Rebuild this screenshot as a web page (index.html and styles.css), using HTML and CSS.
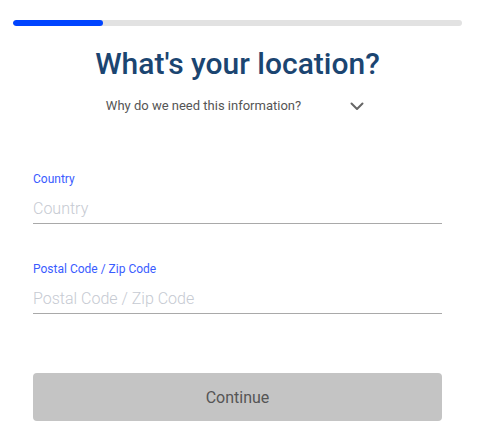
FILE: index.html
```html
<!DOCTYPE html>
<html lang="en">
<head>
<meta charset="utf-8">
<title>What's your location?</title>
<link rel="stylesheet" href="styles.css">
</head>
<body>
<main class="page">
  <div class="progress"><div class="progress-fill" style="width: 20%"></div></div>
  <h1 class="title">What's your location?</h1>
  <div class="why">
    <span class="why-text">Why do we need this information?</span>
    <svg class="chevron" width="24" height="24" viewBox="0 0 24 24" aria-hidden="true">
      <path d="M6.5 9.5 L12 15 L17.5 9.5" fill="none" stroke="#666" stroke-width="2" stroke-linecap="round" stroke-linejoin="round"/>
    </svg>
  </div>
  <form class="form">
    <div class="field">
      <label class="label" for="country">Country</label>
      <input class="input" id="country" type="text" placeholder="Country">
    </div>
    <div class="field field-second">
      <label class="label" for="postal">Postal Code / Zip Code</label>
      <input class="input" id="postal" type="text" placeholder="Postal Code / Zip Code">
    </div>
    <button class="button" type="button">Continue</button>
  </form>
</main>
</body>
</html>
```
FILE: styles.css
```css
* { box-sizing: border-box; }
html, body { margin: 0; padding: 0; background: #fff; }
body { font-family: Roboto, "Liberation Sans", Arial, sans-serif; }
.page {
  width: 477px;
  padding: 20px 15px 0 13px;
}
.progress {
  height: 6px;
  width: 449px;
  background: #e2e2e2;
  border-radius: 3px;
  overflow: hidden;
}
.progress-fill {
  height: 100%;
  background: #0044ff;
  border-radius: 3px;
}
.title {
  margin: 19px 0 0;
  font-size: 30px;
  line-height: 38px;
  font-weight: 500;
  color: #1b4571;
  text-align: center;
}
.why {
  margin-top: 11px;
  display: flex;
  justify-content: center;
  align-items: center;
  gap: 44px;
  height: 24px;
}
.why-text {
  font-size: 13px;
  line-height: 20px;
  color: #555;
}
.chevron { display: block; }
.form {
  padding: 0 20px;
  margin-top: 53px;
}
.field { display: flex; flex-direction: column; }
.field-second { margin-top: 37px; }
.label {
  font-size: 12px;
  line-height: 16px;
  color: #3a5cff;
}
.input {
  margin-top: 11px;
  border: 0;
  border-bottom: 1px solid #a9a9a9;
  border-radius: 0;
  padding: 0 0 5px;
  height: 26px;
  line-height: 20px;
  font-family: inherit;
  font-size: 16px;
  font-weight: 300;
  color: #333;
  background: transparent;
  outline: none;
  width: 100%;
}
.input::placeholder { color: #c6cad2; opacity: 1; }
.button {
  display: block;
  width: 100%;
  margin-top: 59px;
  height: 48px;
  border: 0;
  border-radius: 4px;
  background: #c4c4c4;
  color: #555;
  font-family: inherit;
  font-size: 16px;
}
```
